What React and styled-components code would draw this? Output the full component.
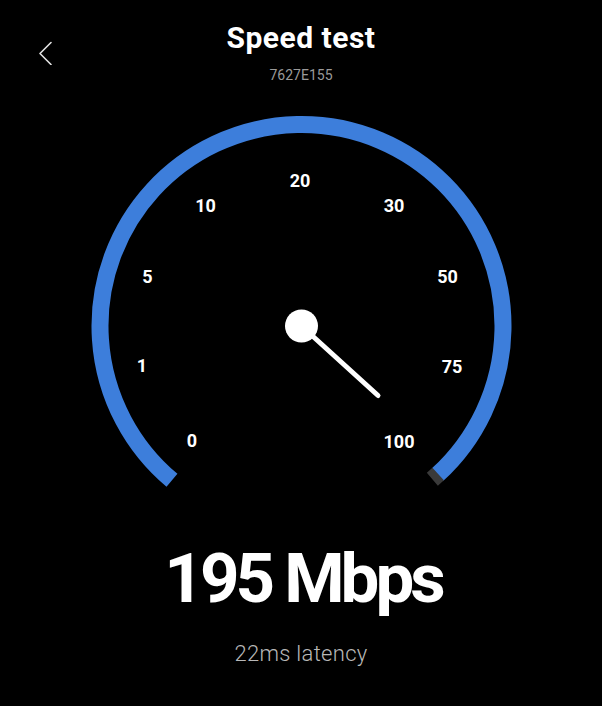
import React from "react";
import styled, { createGlobalStyle } from "styled-components";

const GlobalStyle = createGlobalStyle`
  html, body {
    margin: 0;
    padding: 0;
    background: #000;
  }
  body {
    font-family: Roboto, "Noto Sans", "Liberation Sans", sans-serif;
    color: #fff;
  }
`;

const Page = styled.div`
  min-height: 706px;
  width: 100%;
  background: #000;
  display: flex;
  flex-direction: column;
  align-items: stretch;
`;

const Header = styled.header`
  display: grid;
  grid-template-columns: 1fr auto 1fr;
  padding-top: 20px;
`;

const BackButton = styled.button`
  justify-self: start;
  align-self: start;
  margin: 21px 0 0 37px;
  padding: 0;
  border: 0;
  background: transparent;
  width: 16px;
  height: 24px;
  display: flex;
  align-items: center;
  justify-content: center;
  cursor: pointer;
`;

const TitleBlock = styled.div`
  display: flex;
  flex-direction: column;
  align-items: center;
`;

const Title = styled.h1`
  margin: 0;
  font-size: 30px;
  line-height: 36px;
  font-weight: 700;
  letter-spacing: 0.5px;
  color: #fff;
`;

const Subtitle = styled.div`
  margin-top: 10px;
  font-size: 14px;
  line-height: 18px;
  color: #9a9a9a;
`;

const GaugeWrap = styled.div`
  margin-top: 16px;
  display: flex;
  justify-content: center;
`;

const GaugeSvg = styled.svg`
  display: block;
  width: 602px;
  height: 400px;
`;

const TickLabel = styled.text`
  font-family: Roboto, "Noto Sans", sans-serif;
  font-size: 18px;
  font-weight: 700;
  fill: #fff;
`;

const Speed = styled.div`
  margin-top: 39px;
  padding-left: 4px;
  text-align: center;
  font-size: 69px;
  line-height: 80px;
  font-weight: 700;
  letter-spacing: -4px;
  color: #fff;
`;

const Latency = styled.div`
  margin-top: 22px;
  text-align: center;
  font-size: 22px;
  line-height: 26px;
  font-weight: 300;
  letter-spacing: 0.3px;
  color: #b8b8b8;
`;

const CX = 301.5;
const CY = 226;
const R = 201.5;

function polar(deg, r = R) {
  const a = (deg * Math.PI) / 180;
  return [CX + r * Math.cos(a), CY + r * Math.sin(a)];
}

function arcPath(startDeg, endDeg, r = R) {
  const [x1, y1] = polar(startDeg, r);
  const [x2, y2] = polar(endDeg, r);
  const large = endDeg - startDeg > 180 ? 1 : 0;
  return `M ${x1} ${y1} A ${r} ${r} 0 ${large} 1 ${x2} ${y2}`;
}

const ticks = [
  { label: "0", x: 192, y: 341 },
  { label: "1", x: 142, y: 266 },
  { label: "5", x: 147.5, y: 177 },
  { label: "10", x: 205.5, y: 106 },
  { label: "20", x: 300, y: 81 },
  { label: "30", x: 394, y: 106 },
  { label: "50", x: 447.5, y: 177 },
  { label: "75", x: 452, y: 267 },
  { label: "100", x: 399, y: 341.5 },
];

function Gauge() {
  return (
    <GaugeSvg viewBox="0 0 602 400">
      <path
        d={arcPath(130, 407.5)}
        fill="none"
        stroke="#3d7edb"
        strokeWidth="17"
      />
      <path
        d={arcPath(407.3, 409.5)}
        fill="none"
        stroke="#3a3a3a"
        strokeWidth="17"
      />
      {ticks.map((t) => (
        <TickLabel key={t.label} x={t.x} y={t.y + 6.4} textAnchor="middle">
          {t.label}
        </TickLabel>
      ))}
      <line
        x1={CX}
        y1={CY}
        x2={378}
        y2={295.5}
        stroke="#fff"
        strokeWidth="5"
        strokeLinecap="round"
      />
      <circle cx={CX} cy={CY} r="16.5" fill="#fff" />
    </GaugeSvg>
  );
}

export default function App() {
  return (
    <>
      <GlobalStyle />
      <Page>
        <Header>
          <BackButton aria-label="Back">
            <svg width="14" height="24" viewBox="0 0 14 24">
              <polyline
                points="13,1.5 2,12.5 13,23.5"
                fill="none"
                stroke="#e2e2e2"
                strokeWidth="1.6"
                strokeLinecap="round"
                strokeLinejoin="round"
              />
            </svg>
          </BackButton>
          <TitleBlock>
            <Title>Speed test</Title>
            <Subtitle>7627E155</Subtitle>
          </TitleBlock>
          <div />
        </Header>
        <GaugeWrap>
          <Gauge />
        </GaugeWrap>
        <Speed>195 Mbps</Speed>
        <Latency>22ms latency</Latency>
      </Page>
    </>
  );
}
